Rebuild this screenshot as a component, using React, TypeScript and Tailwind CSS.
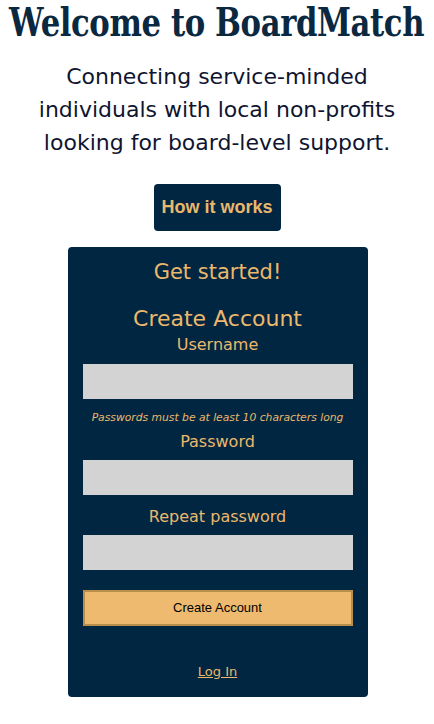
export default function App() {
  return (
    <div className="min-h-[724px] bg-white flex flex-col items-center overflow-hidden font-['DejaVu_Sans',sans-serif]">
      {/* Heading */}
      <h1 className="mt-[-2px] text-[31px] leading-[48px] font-bold text-[#0b2841] tracking-[-0.4px] font-['DejaVu_Serif',serif] whitespace-nowrap scale-x-[0.99] scale-y-[1.29]">
        Welcome to BoardMatch
      </h1>

      <p className="mt-[14px] w-[410px] text-center text-[22px] leading-[33px] text-[#0f1530]">
        Connecting service-minded individuals with local non-profits looking for board-level support.
      </p>

      <button className="mt-[25px] h-[47px] w-[127px] rounded-[4px] bg-[#012641] text-[#e9b86c] text-[18px] font-bold font-['Liberation_Sans',sans-serif]">
        How it works
      </button>

      {/* Sign up card */}
      <div className="mt-[16px] ml-[1px] w-[300px] h-[450px] rounded-[4px] bg-[#012641] px-[15px] flex flex-col items-center text-[#ebb86c]">
        <h2 className="mt-[10px] text-[21px] leading-[30px]">Get started!</h2>
        <h3 className="mt-[18px] text-[22px] leading-[28px]">Create Account</h3>
        <label className="text-[16px] leading-[24px]">Username</label>
        <input className="mt-[7px] w-full h-[35px] bg-[#d3d3d3] outline-none" />
        <p className="mt-[11px] text-[10.75px] leading-[16px] italic whitespace-nowrap">Passwords must be at least 10 characters long</p>
        <label className="mt-[4px] text-[16px] leading-[24px]">Password</label>
        <input type="password" className="mt-[6px] w-full h-[35px] bg-[#d3d3d3] outline-none" />
        <label className="mt-[10px] text-[16px] leading-[24px]">Repeat password</label>
        <input type="password" className="mt-[6px] w-full h-[35px] bg-[#d3d3d3] outline-none" />
        <button className="mt-[20px] w-full h-[36px] bg-[#edba70] border-2 border-[#b98f4c] text-black text-[13px] font-['Liberation_Sans',sans-serif]">
          Create Account
        </button>
        <a href="#" className="mt-[36px] text-[13px] underline">Log In</a>
      </div>
    </div>
  );
}
